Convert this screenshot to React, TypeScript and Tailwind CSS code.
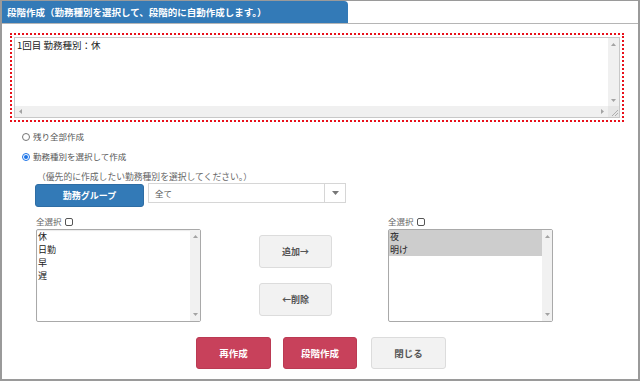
const UpArrow = () => (
  <svg width="5" height="3" viewBox="0 0 5 3"><path d="M0 3 L2.5 0 L5 3 Z" fill="#a3a3a3" /></svg>
);
const DownArrow = () => (
  <svg width="5" height="3" viewBox="0 0 5 3"><path d="M0 0 L2.5 3 L5 0 Z" fill="#a3a3a3" /></svg>
);
const LeftArrow = () => (
  <svg width="3" height="5" viewBox="0 0 3 5"><path d="M3 0 L0 2.5 L3 5 Z" fill="#a3a3a3" /></svg>
);
const RightArrow = () => (
  <svg width="3" height="5" viewBox="0 0 3 5"><path d="M0 0 L3 2.5 L0 5 Z" fill="#a3a3a3" /></svg>
);

function ListBox({ items, selected }: { items: string[]; selected: boolean }) {
  return (
    <div className="w-[165px] h-[93px] mt-[2px] border border-[#a9a9a9] rounded-[2px] flex bg-white shadow-[inset_0_1px_1px_rgba(0,0,0,0.08)]">
      <div className="flex-1 flex flex-col">
        {items.map((it) => (
          <div
            key={it}
            className={`h-[13px] leading-[13px] text-[9px] text-[#222] pl-[1px] ${selected ? "bg-[#cdcdcd]" : ""}`}
          >
            {it}
          </div>
        ))}
      </div>
      <div className="w-[10px] bg-[#f1f1f1] flex flex-col items-center justify-between pt-[5px] pb-[5px]">
        <UpArrow />
        <DownArrow />
      </div>
    </div>
  );
}

function SelectAll() {
  return (
    <div className="h-[11px] flex items-center gap-[3px] text-[8.5px] text-[#666]">
      <span>全選択</span>
      <span className="w-[8px] h-[8px] border border-[#555] rounded-[2px] bg-white" />
    </div>
  );
}

export default function App() {
  return (
    <div className="w-[640px] h-[381px] bg-white border-t border-l-2 border-r-2 border-b-2 border-[#9a9a9a] font-['Noto_Sans_CJK_JP','Noto_Sans',sans-serif] overflow-hidden flex flex-col">
      {/* header */}
      <div className="h-[23px] shrink-0 border-b border-[#b5b5b5] flex">
        <div className="w-[346px] h-[22px] bg-[#337ab7] rounded-tr-[4px] text-white font-bold text-[9.5px] leading-[22px] pl-[5px] whitespace-nowrap">
          段階作成（勤務種別を選択して、段階的に自動作成します。）
        </div>
      </div>

      {/* textarea with red dotted outline */}
      <div className="mt-[9px] ml-[8px] w-[614px] h-[89px] shrink-0 border-2 border-dotted border-[#e8101a] p-[2px]">
        <div className="w-full h-full border border-[#c8c8c8] flex flex-col bg-white">
          <div className="flex-1 flex">
            <div className="flex-1 pl-[2px] pt-[1px] text-[9.5px] leading-[12px] text-[#222] whitespace-pre">1回目 勤務種別：休</div>
            <div className="w-[11px] bg-[#f0f0f0] flex flex-col items-center justify-between pt-[5px] pb-[4px]">
              <UpArrow />
              <DownArrow />
            </div>
          </div>
          <div className="h-[11px] flex">
            <div className="flex-1 bg-[#f0f0f0] flex items-center justify-between px-[4px]">
              <LeftArrow />
              <RightArrow />
            </div>
            <div className="w-[11px] bg-[#e6e6e6] relative">
              <svg width="11" height="11" viewBox="0 0 11 11" className="absolute inset-0">
                <path d="M10 4 L4 10 M10 7 L7 10" stroke="#a0a0a0" strokeWidth="0.8" />
              </svg>
            </div>
          </div>
        </div>
      </div>

      {/* radio 1 */}
      <div className="mt-[8px] ml-[20px] h-[13px] flex items-center gap-[3px] text-[8.5px] text-[#555]">
        <span className="w-[8px] h-[8px] rounded-full border border-[#767676] bg-white" />
        <span>残り全部作成</span>
      </div>
      {/* radio 2 */}
      <div className="mt-[7px] ml-[20px] h-[13px] flex items-center gap-[3px] text-[8.5px] text-[#555]">
        <span className="w-[8px] h-[8px] rounded-full border border-[#1a73e8] bg-white flex items-center justify-center">
          <span className="w-[4px] h-[4px] rounded-full bg-[#1a73e8]" />
        </span>
        <span>勤務種別を選択して作成</span>
      </div>
      {/* hint */}
      <div className="mt-[8px] ml-[35px] h-[12px] leading-[12px] text-[8.8px] text-[#666]">
        （優先的に作成したい勤務種別を選択してください。）
      </div>
      {/* group button + select */}
      <div className="mt-[1px] ml-[33px] flex items-start gap-[4px]">
        <div className="w-[109px] h-[23px] bg-[#337ab7] border border-[#2e6da4] rounded-[3px] text-white font-bold text-[9px] flex items-center justify-center">
          勤務グループ
        </div>
        <div className="w-[198px] h-[20px] -mt-[1px] border border-[#d6d6d6] bg-white flex">
          <div className="flex-1 pl-[6px] text-[8.5px] text-[#555] leading-[18px]">全て</div>
          <div className="w-[21px] border-l border-[#d6d6d6] flex items-center justify-center">
            <svg width="7" height="4" viewBox="0 0 7 4"><path d="M0 0 L3.5 4 L7 0 Z" fill="#777" /></svg>
          </div>
        </div>
      </div>

      {/* lists */}
      <div className="mt-[9px] ml-[34px] flex items-start">
        <div className="w-[165px] flex flex-col">
          <SelectAll />
          <ListBox items={["休", "日勤", "早", "遅"]} selected={false} />
        </div>
        <div className="ml-[58px] w-[73px] pt-[19px] flex flex-col gap-[15px]">
          <div className="h-[33px] bg-[#f2f2f2] border border-[#dcdcdc] rounded-[3px] flex items-center justify-center text-[9px] font-bold text-[#555]">
            追加→
          </div>
          <div className="h-[33px] bg-[#f2f2f2] border border-[#dcdcdc] rounded-[3px] flex items-center justify-center text-[9px] font-bold text-[#555]">
            ←削除
          </div>
        </div>
        <div className="ml-[56px] w-[165px] flex flex-col">
          <SelectAll />
          <ListBox items={["夜", "明け"]} selected={true} />
        </div>
      </div>

      {/* bottom buttons */}
      <div className="mt-[15px] ml-[194px] flex">
        <div className="w-[75px] h-[32px] bg-[#c8415b] border border-[#bb3a53] rounded-[3px] text-white font-bold text-[9.5px] flex items-center justify-center">
          再作成
        </div>
        <div className="ml-[12px] w-[74px] h-[32px] bg-[#c8415b] border border-[#bb3a53] rounded-[3px] text-white font-bold text-[9.5px] flex items-center justify-center">
          段階作成
        </div>
        <div className="ml-[14px] w-[75px] h-[32px] bg-[#f2f2f2] border border-[#dcdcdc] rounded-[3px] text-[#555] font-bold text-[9.5px] flex items-center justify-center">
          閉じる
        </div>
      </div>
    </div>
  );
}
